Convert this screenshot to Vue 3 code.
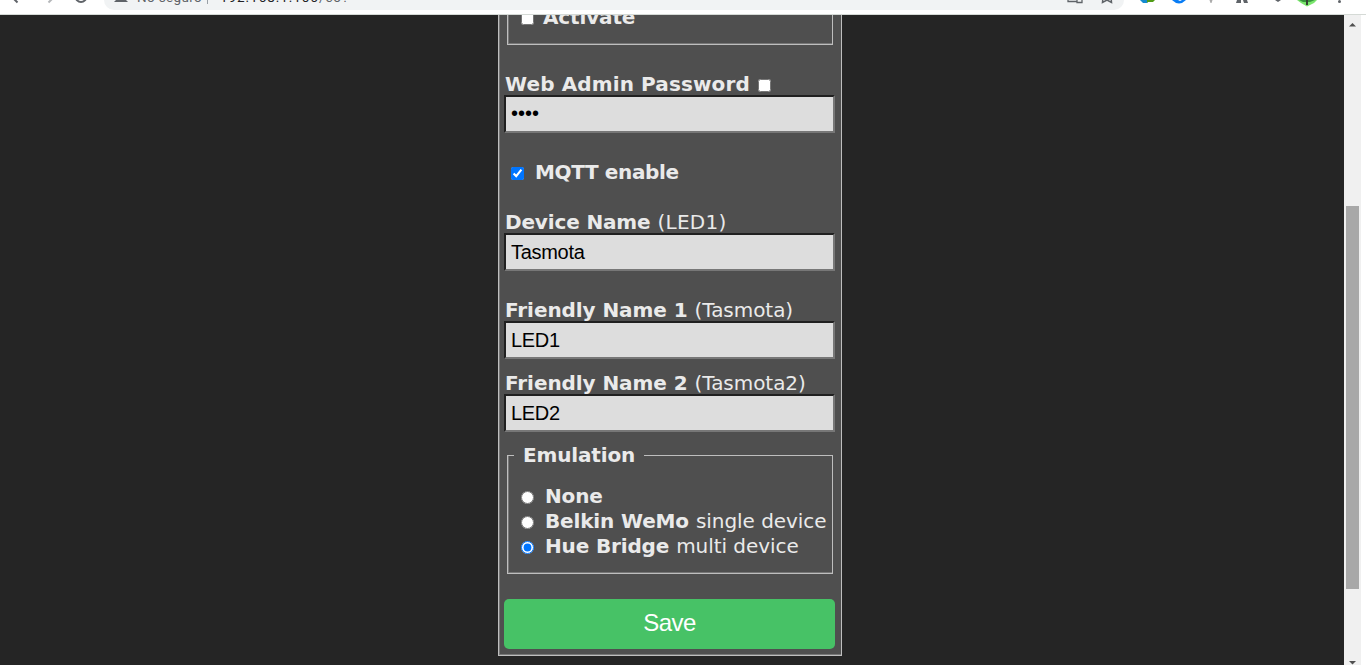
<script setup>
import { ref } from 'vue'

const deviceName = ref('Tasmota')
const friendly1 = ref('LED1')
const friendly2 = ref('LED2')
const password = ref('••••')
const emulation = ref('hue')
const modes = [
  { id: 'none', name: 'None', note: '' },
  { id: 'wemo', name: 'Belkin WeMo', note: 'single device' },
  { id: 'hue', name: 'Hue Bridge', note: 'multi device' },
]
</script>

<template>
  <div class="window">
    <header class="toolbar">
      <svg class="nav" width="104" height="14" viewBox="0 0 104 14">
        <path d="M13-2 17.500 2.500" fill="none" stroke="#5f6368" stroke-width="2" />
        <path d="M48.500 2.500 53-2" fill="none" stroke="#b5b7ba" stroke-width="2" />
        <circle cx="81" cy="-3.500" r="5.500" fill="none" stroke="#5f6368" stroke-width="2" />
      </svg>
      <div class="address">
        <svg class="warn" width="14" height="3" viewBox="0 0 14 3"><path d="M2 0H12L14 2H0Z" fill="#5f6368" /></svg>
        <span class="insecure">No seguro</span>
        <span class="bar"></span>
        <span class="host">192.168.1.106</span><span class="path">/co?</span>
        <svg class="tools" width="60" height="14" viewBox="0 0 60 14">
          <path d="M4 0V1.500H13M13-3V2.500H18V-3" fill="none" stroke="#5f6368" stroke-width="1.300" />
          <path d="M39-3 38.500 2.500 43 0 47.500 2.500 47-3" fill="none" stroke="#5f6368" stroke-width="1.500" />
        </svg>
      </div>
      <svg class="extensions" width="242" height="14" viewBox="1124 0 242 14">
        <path d="M1140 0H1149L1147 3H1143Z" fill="#168bd0" />
        <path d="M1147 0H1155L1153 2H1148L1147 3Z" fill="#519c16" />
        <path d="M1172 0Q1179 7 1186 0Z" fill="#087cf5" />
        <path d="M1178 0 1182 0 1180 1Z" fill="#fff" />
        <path d="M1209.500 0H1212.500L1211.500 3H1210.500Z" fill="#aaa" />
        <path d="M1237 0H1241V3H1236ZM1243 0H1247L1248 3H1244Z" fill="#5f6368" />
        <path d="M1275 0H1281L1278 2Z" fill="#5f6368" />
        <path d="M1297 0H1317L1314 3 1307 6.500 1301 3Z" fill="#7be66e" />
        <path d="M1299 0H1315L1310 2H1303Z" fill="#36943c" />
        <path d="M1306 0H1308V5H1306Z" fill="#344333" />
        <circle cx="1339.500" cy="1.500" r="1.500" fill="#5f6368" />
      </svg>
    </header>
    <div class="viewport">
      <main class="page">
        <form class="panel" @submit.prevent>
          <div class="upper">
            <label class="check activate"><input type="checkbox" /><b>Activate</b></label>
          </div>
          <label class="title web"><b>Web Admin Password</b><input type="checkbox" /></label>
          <input v-model="password" class="field dots" type="text" />
          <label class="check mqtt"><input type="checkbox" checked /><b>MQTT enable</b></label>
          <label class="title device"><b>Device Name</b><span>(LED1)</span></label>
          <input v-model="deviceName" class="field" type="text" />
          <label class="title first"><b>Friendly Name 1</b><span>(Tasmota)</span></label>
          <input v-model="friendly1" class="field" type="text" />
          <label class="title second"><b>Friendly Name 2</b><span>(Tasmota2)</span></label>
          <input v-model="friendly2" class="field" type="text" />
          <fieldset class="emulation">
            <legend><b>Emulation</b></legend>
            <label v-for="m in modes" :key="m.id" class="mode">
              <input v-model="emulation" type="radio" :value="m.id" /><b :class="m.id">{{ m.name }}</b><span>{{ m.note }}</span>
            </label>
          </fieldset>
          <button class="save">Save</button>
        </form>
      </main>
      <aside class="scrollbar">
        <svg width="9" height="5" viewBox="0 0 9 5"><path d="M1 4.500 4.500 1 8 4.500Z" fill="#505050" /></svg>
        <div class="thumb"></div>
        <svg class="down" width="9" height="5" viewBox="0 0 9 5"><path d="M1 1H8L4.500 4.500Z" fill="#505050" /></svg>
      </aside>
    </div>
  </div>
</template>

<style>
body { overflow: hidden; }
</style>

<style scoped>
* { box-sizing: border-box; }
.window { width: 1366px; height: 665px; display: flex; flex-direction: column; overflow: hidden; background: #fff; }
.toolbar { height: 15px; flex: none; display: flex; overflow: hidden; border-bottom: 1px solid #d5dad6; }
.toolbar svg { flex: none; }
.address { width: 1020px; height: 10px; padding-left: 10px; background: #f1f3f4; border-radius: 0 0 14px 14px; display: flex; align-items: flex-start; font: 13.5px/16px Roboto, sans-serif; overflow: hidden; }
.address span { margin-top: -11px; white-space: nowrap; }
.warn { margin-right: 9px; }
.insecure { width: 70px; color: #5f6368; letter-spacing: .35px; }
.address .bar { width: 1px; height: 15px; margin-right: 12px; background: #9aa0a6; }
.host { color: #202124; letter-spacing: .95px; }
.path { color: #5f6368; letter-spacing: .9px; }
.tools { margin-left: auto; }
.viewport { flex: 1; display: flex; min-height: 0; }
.page { width: 1344px; background: #252525; padding-left: 498px; }
.panel { width: 344px; height: 641px; padding: 0 6px; display: flex; flex-direction: column; background: #4f4f4f; border: 1px solid #bebebe; border-top: 0; box-shadow: inset 1px -1px #777; color: #eaeaea; font: 20px/25px "DejaVu Sans", Verdana, sans-serif; }
.panel > * { flex: none; }
b { letter-spacing: -.15px; white-space: nowrap; }
input { margin: 0; }
.upper { height: 30px; margin: 0 2px; padding-left: 13px; overflow: hidden; border: 1px solid #bebebe; border-top: 0; box-shadow: inset 1px -1px #777; }
.check, .title, .mode { display: flex; align-items: center; white-space: nowrap; }
.check { height: 25px; }
input[type='checkbox'], input[type='radio'] { width: 13px; height: 13px; flex: none; position: relative; top: 1px; }
.activate { margin-top: -10px; gap: 9px; }
.title { height: 25px; gap: 7px; }
.title span, .mode span { letter-spacing: -.05px; }
.device span { letter-spacing: .25px; }
.web { margin-top: 27px; gap: 8px; }
.web b { letter-spacing: .12px; }
.field { width: 331px; height: 38px; margin: -2px 0 0 -1px; padding: 0 5px; background: #ddd; border: 2px solid; border-color: #202020 #777 #777 #202020; border-radius: 0; outline: 0; color: #000; font: 20px "Liberation Sans", Arial, sans-serif; letter-spacing: -.3px; }
.dots { padding-bottom: 1px; letter-spacing: 0; }
.mqtt { margin: 27px 0 0 6px; gap: 11px; }
.mqtt b { letter-spacing: -.35px; }
.device { margin-top: 25px; }
.first { margin-top: 27px; }
.second { margin-top: 12px; }
.first b, .second b { letter-spacing: -.07px; }
.emulation { height: 131px; min-width: 0; margin: 11px 2px 0; padding: 16px 0 0 13px; border: 1px solid #bebebe; box-shadow: inset 1px -1px #777; }
legend { height: 25px; margin-left: -7px; padding: 0 9px; }
.mode { height: 25px; }
.mode b { margin: 0 7px 0 11px; }
.save { width: 331px; height: 50px; margin: 25px 0 0 -1px; padding: 0 0 3px; border: 0; border-radius: 5px; background: #47c266; color: #fff; font: 24px "Liberation Sans", Arial, sans-serif; letter-spacing: -.5px; }
.scrollbar { width: 17px; background: #f0f0f0; display: flex; flex-direction: column; align-items: center; padding-top: 7px; }
.scrollbar svg { flex: none; }
.thumb { width: 13px; height: 383px; flex: none; margin-top: 179px; background: #a8a8a8; }
.down { margin-top: 71px; }
</style>
